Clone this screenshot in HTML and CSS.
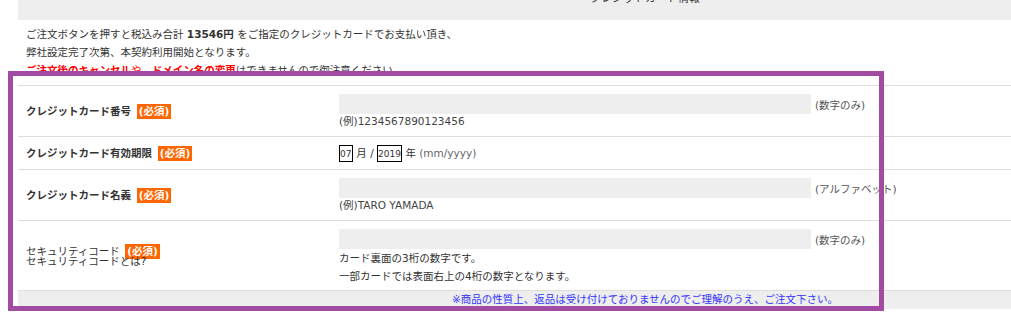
FILE: index.html
```html
<!DOCTYPE html>
<html lang="ja">
<head>
<meta charset="utf-8">
<title>クレジットカード情報</title>
<link rel="stylesheet" href="styles.css">
</head>
<body>
<div class="page">
  <div class="head">クレジットカード情報</div>
  <div class="intro">
    <p>ご注文ボタンを押すと税込み合計 <b>13546円</b> をご指定のクレジットカードでお支払い頂き、</p>
    <p>弊社設定完了次第、本契約利用開始となります。</p>
    <p class="warn"><b>ご注文後のキャンセル</b>や、<b>ドメイン名の変更</b><span class="rest">はできませんので御注意ください。</span></p>
  </div>
  <div class="form">
    <div class="row">
      <div class="label strong">クレジットカード番号 <span class="req">(必須)</span></div>
      <div class="value">
        <div class="field"><input class="text" type="text"><span class="hint">(数字のみ)</span></div>
        <div class="example">(例)1234567890123456</div>
      </div>
    </div>
    <div class="row">
      <div class="label strong">クレジットカード有効期限 <span class="req">(必須)</span></div>
      <div class="value">
        <div class="date"><input class="box mm" type="text" value="07"> 月 / <input class="box yy" type="text" value="2019"> 年 <span class="fmt">(mm/yyyy)</span></div>
      </div>
    </div>
    <div class="row">
      <div class="label strong">クレジットカード名義 <span class="req">(必須)</span></div>
      <div class="value">
        <div class="field"><input class="text" type="text"><span class="hint">(アルファベット)</span></div>
        <div class="example">(例)TARO YAMADA</div>
      </div>
    </div>
    <div class="row">
      <div class="label tight">セキュリティコード <span class="req">(必須)</span><br>セキュリティコードとは?</div>
      <div class="value">
        <div class="field"><input class="text" type="text"><span class="hint">(数字のみ)</span></div>
        <div class="note">カード裏面の3桁の数字です。</div>
        <div class="note">一部カードでは表面右上の4桁の数字となります。</div>
      </div>
    </div>
    <div class="foot">※商品の性質上、返品は受け付けておりませんのでご理解のうえ、ご注文下さい。</div>
  </div>
</div>
<div class="frame"></div>
</body>
</html>
```

FILE: styles.css
```css
html, body {
  margin: 0;
  padding: 0;
  overflow: hidden;
  background: #fff;
}
body {
  font-family: "DejaVu Sans", "Noto Sans CJK JP", sans-serif;
  font-size: 10.5px;
  color: #333;
  position: relative;
  height: 324px;
}
.page {
  margin: -10px 0 0 18px;
  width: 1254px;
}
.head {
  height: 30px;
  background: #eee;
  text-align: center;
  line-height: 18px;
  font-size: 11px;
  color: #333;
}
.intro {
  padding: 5px 8px 6px;
  line-height: 18px;
}
.intro p {
  margin: 0;
}
.intro b {
  font-weight: bold;
}
.warn {
  color: #f00;
}
.warn .rest {
  color: #333;
}
.form {
  border-top: 1px solid #ddd;
}
.row {
  display: grid;
  grid-template-columns: 321px 1fr;
  border-bottom: 1px solid #ddd;
}
.label {
  align-self: center;
  padding-left: 8px;
  line-height: 16px;
}
.label.strong {
  font-weight: bold;
}
.label.tight {
  line-height: 10px;
}
.req {
  background: #f60;
  color: #fff;
  font-weight: bold;
  padding: 1px 2px 2px;
  margin-left: 2px;
}
.value {
  padding: 8px 0 5px;
}
.field {
  display: flex;
  align-items: center;
  gap: 4px;
}
.text {
  width: 472px;
  height: 20px;
  border: none;
  background: #eee;
  padding: 0;
  margin: 0;
  outline: none;
}
.hint {
  color: #555;
}
.example {
  line-height: 15px;
  padding-bottom: 2px;
  color: #444;
}
.note {
  line-height: 18px;
  color: #333;
}
.date {
  display: flex;
  height: 19px;
  align-items: flex-start;
  line-height: 17px;
  white-space: pre;
}
.box {
  height: 17px;
  box-sizing: border-box;
  border: 1px solid #000;
  padding: 0;
  margin: 0;
  font-family: "DejaVu Sans", sans-serif;
  font-size: 9px;
  color: #333;
  background: #fff;
  outline: none;
}
.mm {
  width: 14px;
}
.yy {
  width: 25px;
}
.fmt {
  color: #666;
}
.foot {
  background: #eee;
  text-align: center;
  color: #3333ff;
  height: 18px;
  line-height: 17px;
}
.frame {
  position: absolute;
  left: 8px;
  top: 71px;
  width: 866px;
  height: 230px;
  border: 5px solid #a24ba3;
  pointer-events: none;
}
```
